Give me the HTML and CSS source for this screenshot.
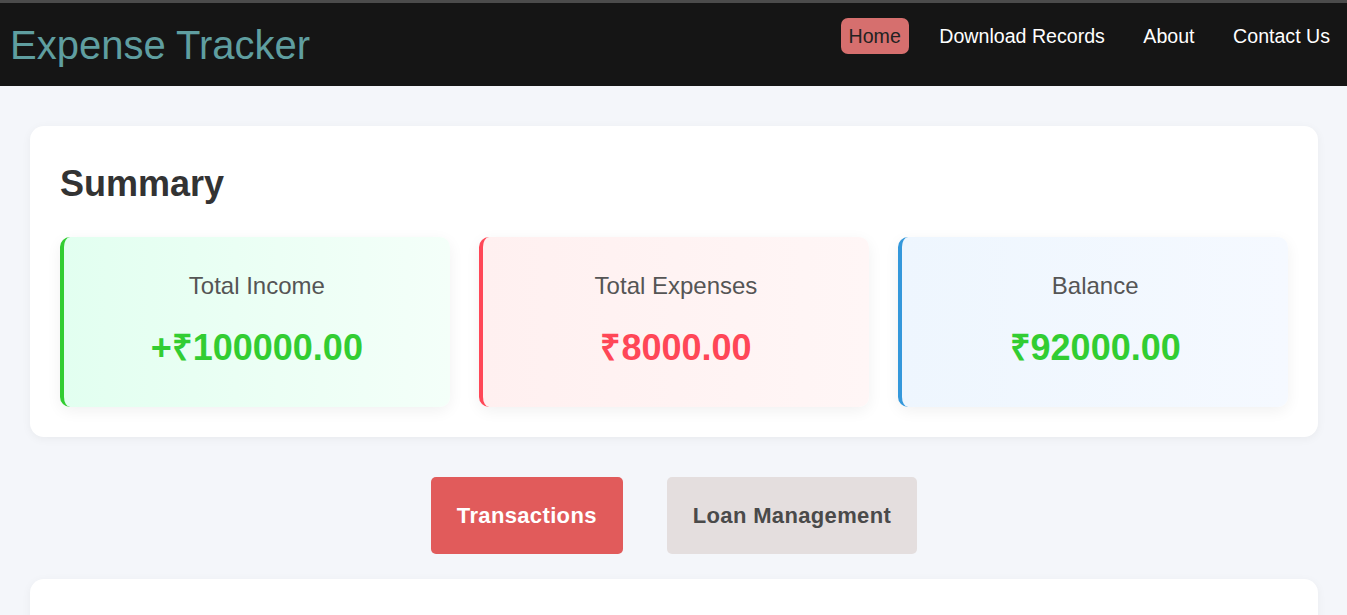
FILE: index.html
```html
<!DOCTYPE html>
<html lang="en">
<head>
<meta charset="utf-8">
<title>Expense Tracker</title>
<link rel="stylesheet" href="styles.css">
</head>
<body>
<header class="topbar">
  <div class="brand">Expense Tracker</div>
  <nav>
    <ul class="nav-links">
      <li><a href="#" class="nav-link active">Home</a></li>
      <li><a href="#" class="nav-link">Download Records</a></li>
      <li><a href="#" class="nav-link">About</a></li>
      <li><a href="#" class="nav-link">Contact Us</a></li>
    </ul>
  </nav>
</header>
<main class="container">
  <section class="panel summary">
    <h2 class="summary-title">Summary</h2>
    <div class="summary-grid">
      <div class="stat stat-income">
        <h3 class="stat-label">Total Income</h3>
        <p class="stat-value value-green">+₹100000.00</p>
      </div>
      <div class="stat stat-expense">
        <h3 class="stat-label">Total Expenses</h3>
        <p class="stat-value value-red">₹8000.00</p>
      </div>
      <div class="stat stat-balance">
        <h3 class="stat-label">Balance</h3>
        <p class="stat-value value-green">₹92000.00</p>
      </div>
    </div>
  </section>
  <div class="tabs">
    <button class="tab tab-active">Transactions</button>
    <button class="tab">Loan Management</button>
  </div>
  <section class="panel lower"></section>
</main>
</body>
</html>
```
FILE: styles.css
```css
* { box-sizing: border-box; }
html, body { margin: 0; padding: 0; }
body {
  background: #f4f6fa;
  font-family: "Liberation Sans", Arial, sans-serif;
  color: #333;
  overflow: hidden;
}
.topbar {
  border-top: 3px solid #4b4b4b;
  background: #151515;
  height: 86px;
  display: flex;
  justify-content: space-between;
  align-items: center;
  padding: 0 9px 0 10px;
}
.brand {
  color: #5f9ea0;
  font-size: 40px;
  line-height: 46px;
}
nav { align-self: flex-start; }
.nav-links {
  list-style: none;
  margin: 15px 0 0;
  padding: 0;
  display: flex;
  gap: 22.5px;
}
.nav-link {
  display: block;
  color: #fff;
  text-decoration: none;
  font-size: 19.6px;
  line-height: 22px;
  padding: 7px 8px;
  border-radius: 7px;
}
.nav-link.active {
  background: #d66f6e;
  color: #222;
}
.container {
  padding: 40px 29px 0 30px;
}
.panel {
  background: #fff;
  border-radius: 14px;
  box-shadow: 0 2px 10px rgba(0, 0, 0, 0.05);
}
.summary {
  padding: 30px 30px 30px;
}
.summary-title {
  margin: 7px 0 33px;
  font-size: 36px;
  line-height: 41px;
  font-weight: bold;
  color: #333;
}
.summary-grid {
  display: grid;
  grid-template-columns: repeat(3, 1fr);
  gap: 29.5px;
}
.stat {
  border-left: 4px solid;
  border-radius: 10px;
  padding: 35px 16px 39px;
  text-align: center;
  box-shadow: 0 4px 15px rgba(0, 0, 0, 0.06);
}
.stat-income {
  border-left-color: #32cd32;
  background: linear-gradient(90deg, #e2fff0, #f4fff9);
}
.stat-expense {
  border-left-color: #ff4757;
  background: linear-gradient(90deg, #fff0f0, #fff6f6);
}
.stat-balance {
  border-left-color: #3498db;
  background: linear-gradient(90deg, #eef6fe, #f5f9ff);
}
.stat-label {
  margin: 0 0 28px;
  font-size: 24px;
  line-height: 27px;
  font-weight: normal;
  color: #555;
}
.stat-value {
  margin: 0;
  font-size: 36px;
  line-height: 41px;
  font-weight: bold;
}
.value-green { color: #32cd32; }
.value-red { color: #ff4757; }
.tabs {
  display: flex;
  justify-content: center;
  gap: 44px;
  margin: 40px 0 25px;
}
.tab {
  font-family: "Liberation Sans", Arial, sans-serif;
  font-size: 22px;
  line-height: 25px;
  font-weight: bold;
  letter-spacing: 0.35px;
  padding: 26px 26px;
  border: none;
  border-radius: 5px;
  background: #e4dede;
  color: #4a4a4a;
}
.tab-active {
  background: #e15b5b;
  color: #fff;
}
.lower {
  height: 300px;
}
```
